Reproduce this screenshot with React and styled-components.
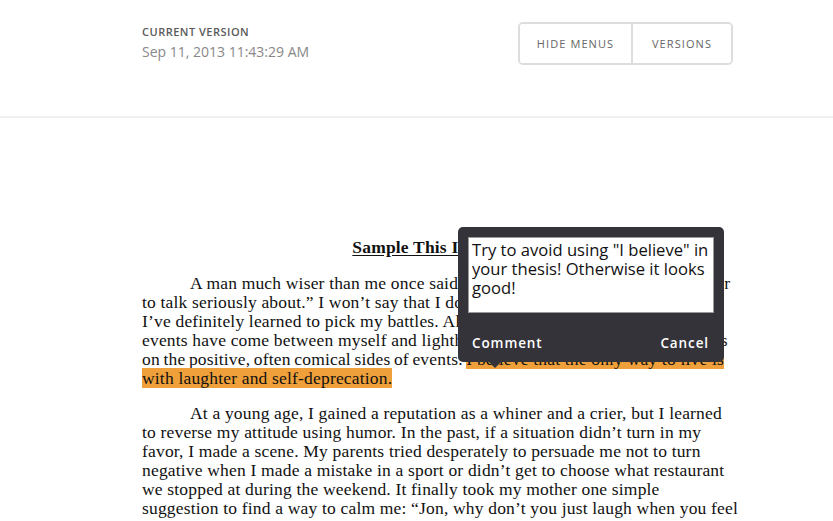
import React from "react";
import styled, { createGlobalStyle } from "styled-components";

const GlobalStyle = createGlobalStyle`
  html, body {
    margin: 0;
    padding: 0;
    background: #ffffff;
    overflow: hidden;
  }
`;

const Page = styled.div`
  width: 833px;
  height: 521px;
  overflow: hidden;
  background: #fff;
`;

const Header = styled.div`
  height: 116px;
  border-bottom: 2px solid #f0f0f0;
  display: flex;
  justify-content: space-between;
  align-items: flex-start;
  padding: 0 100px 0 142px;
  box-sizing: content-box;
  font-family: "Open Sans", "Noto Sans", sans-serif;
`;

const VersionInfo = styled.div`
  padding-top: 24px;
  display: flex;
  flex-direction: column;
  gap: 3px;
`;

const Label = styled.div`
  font-size: 11px;
  font-weight: 600;
  letter-spacing: 0.5px;
  color: #5a5a5a;
  text-transform: uppercase;
  line-height: 16px;
`;

const DateText = styled.div`
  font-size: 14px;
  color: #888;
  line-height: 18px;
`;

const ButtonGroup = styled.div`
  margin-top: 22px;
  display: flex;
  height: 39px;
  border: 2px solid #dddddd;
  border-radius: 5px;
  overflow: hidden;
`;

const HeaderButton = styled.button`
  font-family: "Open Sans", "Noto Sans", sans-serif;
  font-size: 11px;
  letter-spacing: 1.1px;
  text-transform: uppercase;
  color: #666;
  background: #fff;
  border: none;
  border-left: ${(p) => (p.$first ? "none" : "2px solid #dddddd")};
  width: ${(p) => p.$width}px;
  padding: 0;
  cursor: pointer;
`;

const Doc = styled.div`
  position: relative;
  margin: 120px 0 0 142px;
  width: 600px;
  font-family: "Liberation Serif", "Times New Roman", serif;
  font-size: 17.5px;
  letter-spacing: 0.18px;
  line-height: 19px;
  color: #111;
`;

const Title = styled.div`
  width: 586px;
  text-align: center;
  font-weight: bold;
  text-decoration: underline;
  text-underline-offset: 2px;
  margin-bottom: 17px;
`;

const Paragraph = styled.div`
  margin-bottom: 16px;
`;

const Line = styled.div`
  white-space: nowrap;
  padding-left: ${(p) => (p.$indent ? "48px" : "0")};
  word-spacing: ${(p) => (p.$tight ? "-1px" : "0")};
`;

const Mark = styled.span`
  background: #efa03a;
  word-spacing: 0;
`;

const Popup = styled.div`
  position: absolute;
  left: 316px;
  top: -11px;
  width: 266px;
  height: 135px;
  background: #343339;
  border-radius: 5px;
  padding: 10px;
  box-sizing: border-box;
  font-family: "Open Sans", "Noto Sans", sans-serif;
  letter-spacing: 0;
  word-spacing: 0;

  &::after {
    content: "";
    position: absolute;
    left: 31px;
    bottom: -6px;
    border-left: 6px solid transparent;
    border-right: 6px solid transparent;
    border-top: 6px solid #343339;
  }
`;

const CommentBox = styled.div`
  height: 76px;
  background: #fff;
  border: 1px solid #999;
  box-sizing: border-box;
  padding: 2px 3px;
  font-size: 16.6px;
  line-height: 19px;
  color: #111;
`;

const Actions = styled.div`
  display: flex;
  justify-content: space-between;
  padding: 20px 5px 0 4px;
`;

const ActionButton = styled.button`
  font-family: "Open Sans", "Noto Sans", sans-serif;
  font-size: 13.5px;
  font-weight: 600;
  letter-spacing: 0.9px;
  color: #fff;
  background: none;
  border: none;
  padding: 0;
  line-height: 20px;
  cursor: pointer;
`;

export default function App() {
  return (
    <Page>
      <GlobalStyle />
      <Header>
        <VersionInfo>
          <Label>Current Version</Label>
          <DateText>Sep 11, 2013 11:43:29 AM</DateText>
        </VersionInfo>
        <ButtonGroup>
          <HeaderButton $first $width={111}>Hide Menus</HeaderButton>
          <HeaderButton $width={100}>Versions</HeaderButton>
        </ButtonGroup>
      </Header>
      <Doc>
        <Title>Sample This I Believe</Title>
        <Paragraph>
          <Line $indent>A man much wiser than me once said, “Life is much too important a matter</Line>
          <Line>to talk seriously about.” I won’t say that I don’t take anything seriously, but</Line>
          <Line>I’ve definitely learned to pick my battles. Although many unfortunate</Line>
          <Line>events have come between myself and lightheartedness, I do try to keep my focus</Line>
          <Line $tight>on the positive, often comical sides of events. <Mark>I believe that the only way to live is</Mark></Line>
          <Line><Mark>with laughter and self-deprecation.</Mark></Line>
        </Paragraph>
        <Paragraph>
          <Line $indent>At a young age, I gained a reputation as a whiner and a crier, but I learned</Line>
          <Line>to reverse my attitude using humor. In the past, if a situation didn’t turn in my</Line>
          <Line>favor, I made a scene. My parents tried desperately to persuade me not to turn</Line>
          <Line>negative when I made a mistake in a sport or didn’t get to choose what restaurant</Line>
          <Line>we stopped at during the weekend. It finally took my mother one simple</Line>
          <Line>suggestion to find a way to calm me: “Jon, why don’t you just laugh when you feel</Line>
          <Line>that way instead?” This had never been an option for me, but I decided to try it</Line>
        </Paragraph>
        <Popup>
          <CommentBox>Try to avoid using "I believe" in your thesis! Otherwise it looks good!</CommentBox>
          <Actions>
            <ActionButton>Comment</ActionButton>
            <ActionButton>Cancel</ActionButton>
          </Actions>
        </Popup>
      </Doc>
    </Page>
  );
}
